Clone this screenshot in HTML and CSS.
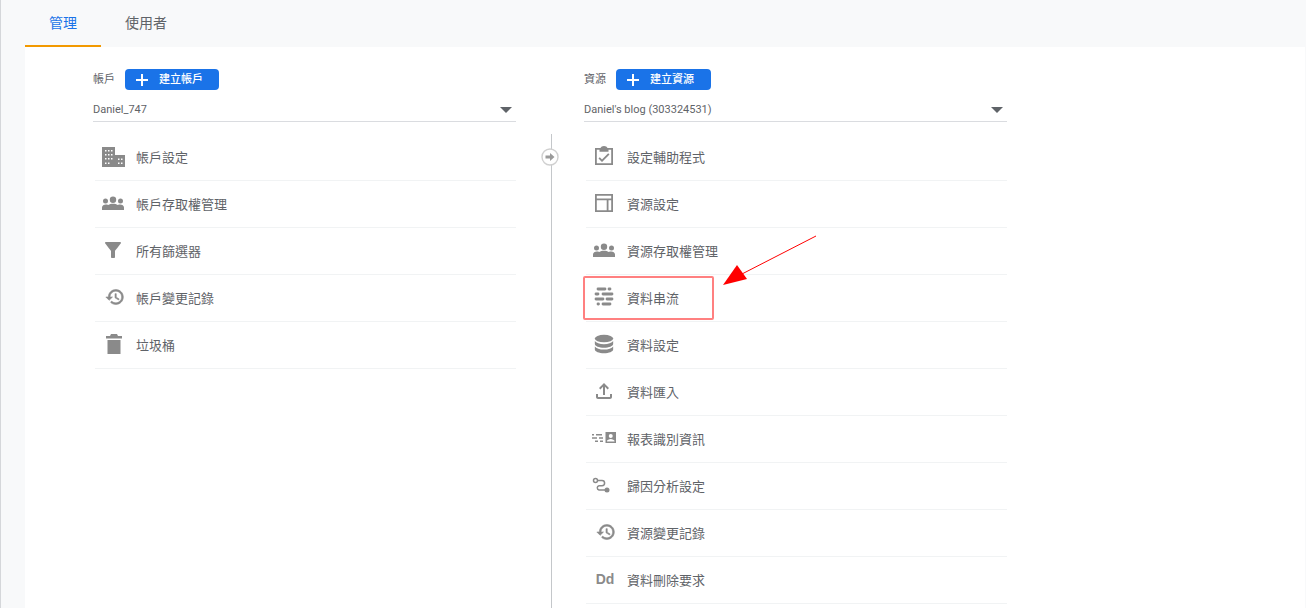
FILE: index.html
```html
<!DOCTYPE html>
<html lang="zh-Hant">
<head>
  <meta charset="UTF-8">
  <title>管理</title>
  <link rel="stylesheet" href="styles.css">
</head>
<body>
  <div class="tabs">
    <div class="tab active">管理</div>
    <div class="tab">使用者</div>
  </div>
  <div class="content">
    <div class="column">
      <div class="column-head">
        <span class="column-label">帳戶</span>
        <button class="create-btn"><svg class="plus" viewBox="0 0 12 12"><path d="M5 0h2v5h5v2H7v5H5V7H0V5h5z"/></svg>建立帳戶</button>
      </div>
      <div class="picker"><span>Daniel_747</span><i class="caret"></i></div>
      <ul class="menu">
        <li><svg viewBox="0 0 24 24"><path fill-rule="evenodd" d="M1 3h13v8h10v12H1zm3 3v1.500h1.500V6zm3 0v1.500h1.500V6zm3 0v1.500h1.500V6zM4 10v1.500h1.500V10zm3 0v1.500h1.500V10zm3 0v1.500h1.500V10zM4 14v1.500h1.500V14zm3 0v1.500h1.500V14zm3 0v1.500h1.500V14zM4 18.500V20h1.500v-1.500zm3 0V20h1.500v-1.500zm10-4V16h1.500v-1.500zm3 0V16h1.500v-1.500zm-3 4V20h1.500v-1.500zm3 0V20h1.500v-1.500z"/></svg>帳戶設定</li>
        <li><svg viewBox="0 0 24 24"><path d="M12 5.500a3.200 3.200 0 1 1 0 6.400 3.200 3.200 0 0 1 0-6.400zM4.500 7.500a2.500 2.500 0 1 1 0 5 2.500 2.500 0 0 1 0-5zM19.500 7.500a2.500 2.500 0 1 1 0 5 2.500 2.500 0 0 1 0-5zM1 19v-2.500c0-1.800 2-3 3.800-3 .9 0 1.600.1 2.400.5 1.300-.8 3-1.200 4.800-1.200s3.500.4 4.800 1.200c.8-.4 1.500-.5 2.400-.5 1.800 0 3.800 1.200 3.800 3V19z"/></svg>帳戶存取權管理</li>
        <li><svg viewBox="0 0 24 24"><path d="M4.250 5.610C6.270 8.200 10 13 10 13v6c0 .55.45 1 1 1h2c.55 0 1-.45 1-1v-6s3.720-4.800 5.740-7.390c.51-.66.04-1.610-.79-1.610H5.040c-.83 0-1.300.95-.79 1.610z"/></svg>所有篩選器</li>
        <li><svg class="history" viewBox="0 0 24 24"><path d="M13 3c-4.970 0-9 4.030-9 9H1l3.890 3.890.07.14L9 12H6c0-3.870 3.130-7 7-7s7 3.130 7 7-3.130 7-7 7c-1.930 0-3.680-.79-4.940-2.060l-1.420 1.420C8.270 19.990 10.510 21 13 21c4.970 0 9-4.030 9-9s-4.030-9-9-9zm-1 5v5l4.280 2.540.72-1.210-3.500-2.080V8H12z"/></svg>帳戶變更記錄</li>
        <li><svg viewBox="0 0 24 24"><path d="M10 2h6l1 2h4v2.500H5V4h4zM6.500 8h13v14h-13z"/></svg>垃圾桶</li>
      </ul>
    </div>
    <div class="column">
      <div class="column-head">
        <span class="column-label">資源</span>
        <button class="create-btn wide"><svg class="plus" viewBox="0 0 12 12"><path d="M5 0h2v5h5v2H7v5H5V7H0V5h5z"/></svg>建立資源</button>
      </div>
      <div class="picker"><span>Daniel's blog (303324531)</span><i class="caret"></i></div>
      <div class="connector">
        <svg class="connector-dot" viewBox="0 0 18 18"><circle cx="9" cy="9" r="8" fill="#fff" stroke="#d0d0d0" stroke-width="1.400"/><path d="M4.500 7.500H9V5l4.500 4L9 13v-2.500H4.500z" fill="#9a9a9a"/></svg>
      </div>
      <ul class="menu">
        <li><svg viewBox="0 0 24 24"><path fill-rule="evenodd" d="M3 4h5.500C9 2.800 10.300 2 12 2s3 .8 3.500 2H21v17H3zm1.800 1.800v13.400h14.400V5.800h-2.700v2h-9v-2zm12.700 4.700-7.500 7.500-3.500-3.500 1.300-1.300 2.200 2.200 6.200-6.200z"/></svg>設定輔助程式</li>
        <li><svg viewBox="0 0 24 24"><path fill-rule="evenodd" d="M3 3h18v18H3zm1.800 1.800v2.700h14.400V4.800zm0 4.500v9.900h9.900V9.300zm11.700 0v9.900h2.700V9.300z"/></svg>資源設定</li>
        <li><svg viewBox="0 0 24 24"><path d="M12 5.500a3.200 3.200 0 1 1 0 6.400 3.200 3.200 0 0 1 0-6.400zM4.500 7.500a2.500 2.500 0 1 1 0 5 2.500 2.500 0 0 1 0-5zM19.500 7.500a2.500 2.500 0 1 1 0 5 2.500 2.500 0 0 1 0-5zM1 19v-2.500c0-1.800 2-3 3.800-3 .9 0 1.600.1 2.400.5 1.300-.8 3-1.200 4.800-1.200s3.500.4 4.800 1.200c.8-.4 1.500-.5 2.400-.5 1.800 0 3.800 1.200 3.800 3V19z"/></svg>資源存取權管理</li>
        <li><svg viewBox="0 0 24 24"><path class="line" d="M6 4h7M17 4h1M4 9h2M11 9h9M4 14h7M15 14h5M6 19h.5M11 19h7"/></svg>資料串流</li>
        <li><svg class="small" viewBox="0 0 24 24"><ellipse cx="12" cy="5.500" rx="11" ry="4.500"/><path d="M1 8.500c1.500 2.400 6 3.700 11 3.700s9.500-1.300 11-3.700V12c0 2.500-5 4.500-11 4.500S1 14.500 1 12zM1 15c1.500 2.400 6 3.700 11 3.700s9.500-1.300 11-3.700v3.500c0 2.500-5 4.500-11 4.500S1 21 1 18.500z"/></svg>資料設定</li>
        <li><svg viewBox="0 0 24 24"><path d="M18 15v3H6v-3H4v3c0 1.100.9 2 2 2h12c1.100 0 2-.9 2-2v-3h-2zM7 9l1.410 1.410L11 7.830V16h2V7.830l2.590 2.580L17 9l-5-5-5 5z"/></svg>資料匯入</li>
        <li><svg viewBox="0 0 24 24"><path fill-rule="evenodd" d="M13.500 6H24v11H13.500zm5.250 2a2 2 0 1 0 0 4 2 2 0 0 0 0-4zM15 15.500h7.500V15c0-1-2.200-2-3.750-2S15 14 15 15zM0 8h2v1.500H0zM4 8h6v1.500H4zM0 11.200h5v1.500H0zM7 11.200h4v1.500H7zM3 14.500h3V16H3zM8 14.500h3V16H8z"/></svg>報表識別資訊</li>
        <li><svg viewBox="0 0 24 24"><circle class="ring" cx="3.500" cy="7.500" r="2"/><circle cx="15" cy="17" r="2.500"/><path class="ring" d="M5.500 7.500H10a2.600 2.600 0 0 1 0 5.200H7a2.200 2.200 0 0 0 0 4.300h6"/></svg>歸因分析設定</li>
        <li><svg class="history" viewBox="0 0 24 24"><path d="M13 3c-4.970 0-9 4.030-9 9H1l3.890 3.890.07.14L9 12H6c0-3.870 3.130-7 7-7s7 3.130 7 7-3.130 7-7 7c-1.930 0-3.680-.79-4.940-2.060l-1.420 1.420C8.270 19.990 10.510 21 13 21c4.970 0 9-4.030 9-9s-4.030-9-9-9zm-1 5v5l4.280 2.540.72-1.210-3.500-2.080V8H12z"/></svg>資源變更記錄</li>
        <li><span class="dd">Dd</span>資料刪除要求</li>
      </ul>
    </div>
  </div>
  <div class="callout"></div>
  <svg class="callout-arrow" viewBox="0 0 100 56"><path d="M96 1 20 40" stroke="#f00" stroke-width="1" fill="none"/><path d="M3 50 17 30 27 44z" fill="#f00"/></svg>
</body>
</html>
```

FILE: styles.css
```css
* { margin: 0; padding: 0; box-sizing: border-box; }
body {
  font-family: 'Noto Sans CJK TC', 'Noto Sans', Arial, sans-serif;
  background-color: #f8f9fa;
  color: #5f6368;
  height: 608px;
  overflow: hidden;
  border-left: 1px solid #d5d7da;
}
.tabs {
  display: flex;
  height: 47px;
  padding-left: 24px;
}
.tab {
  padding: 0 24px;
  font-size: 14px;
  line-height: 45px;
  color: #5f6368;
  border-bottom: 2px solid transparent;
}
.tab.active {
  color: #1a73e8;
  border-bottom-color: #f29900;
}
.content {
  display: flex;
  gap: 68px;
  margin-left: 24px;
  margin-right: 1px;
  height: 561px;
  padding-left: 68px;
  background-color: white;
}
.column {
  position: relative;
  width: 423px;
  padding-top: 22px;
}
.column-head {
  display: flex;
  align-items: center;
  gap: 10px;
  height: 21px;
}
.column-label { font-size: 11px; line-height: 19px; padding-bottom: 2px; }
.create-btn {
  display: flex;
  align-items: center;
  height: 21px;
  width: 94px;
  padding: 0 0 4px 11px;
  background-color: #1a73e8;
  color: white;
  border: none;
  border-radius: 4px;
  font-family: inherit;
  font-size: 11px;
  font-weight: 500;
}
.create-btn.wide { width: 95px; }
.plus {
  width: 12px;
  height: 12px;
  margin: 4px 11px 0 0;
  fill: white;
}
.picker {
  display: flex;
  justify-content: space-between;
  align-items: center;
  height: 32px;
  padding: 7px 4px 0 0;
  font-family: Roboto, Arial, sans-serif;
  font-size: 11px;
  border-bottom: 1px solid #dadce0;
}
.caret {
  width: 0;
  height: 0;
  border-left: 6px solid transparent;
  border-right: 6px solid transparent;
  border-top: 6px solid #5f6368;
  margin-top: 2px;
}
.menu {
  list-style: none;
  margin: 12px 0 0 2px;
}
.menu li {
  display: flex;
  align-items: center;
  height: 47px;
  padding: 0 0 2px 6px;
  font-size: 13px;
  border-bottom: 1px solid #f1f3f4;
}
.menu svg {
  width: 24px;
  height: 24px;
  margin-right: 11px;
  flex-shrink: 0;
  fill: #8a8a8a;
}
.menu svg.small {
  width: 20px;
  height: 20px;
  margin: 0 13px 0 2px;
}
.menu svg.history {
  width: 20px;
  height: 20px;
  margin: 0 11px 0 4px;
  stroke: #8a8a8a;
  stroke-width: 0.7;
}
.menu .line {
  fill: none;
  stroke: #8a8a8a;
  stroke-width: 2.8;
  stroke-linecap: round;
}
.menu .ring {
  fill: none;
  stroke: #8a8a8a;
  stroke-width: 1.5;
}
.dd {
  width: 24px;
  margin-right: 11px;
  padding-left: 2px;
  font-family: 'Liberation Sans', Arial, sans-serif;
  font-size: 14px;
  font-weight: 700;
  text-align: center;
  color: #8a8a8a;
}
.connector {
  position: absolute;
  left: -33px;
  top: 87px;
  bottom: 0;
  width: 1px;
  background-color: #c4c7ca;
}
.connector-dot {
  position: absolute;
  left: -10px;
  top: 14px;
  width: 18px;
  height: 18px;
}
.callout {
  position: absolute;
  left: 583px;
  top: 276px;
  width: 131px;
  height: 44px;
  border: 2px solid #ff8080;
  border-radius: 2px;
}
.callout-arrow {
  position: absolute;
  left: 720px;
  top: 235px;
  width: 100px;
  height: 56px;
}
```
